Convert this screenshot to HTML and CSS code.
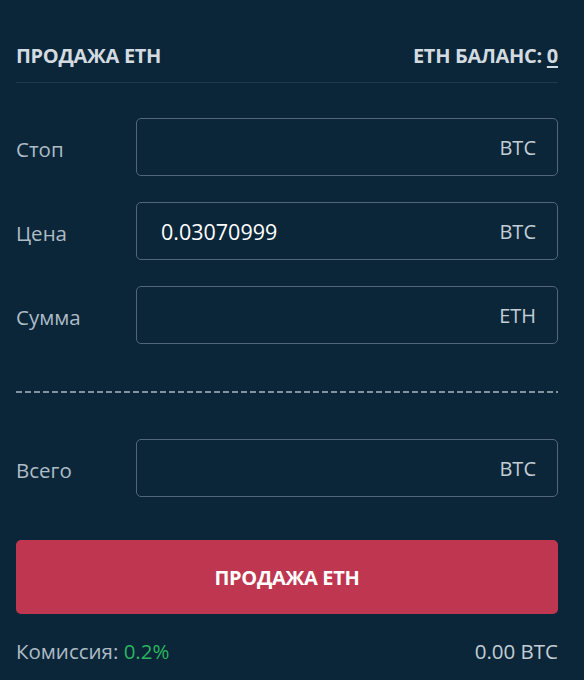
FILE: index.html
```html
<!DOCTYPE html>
<html lang="ru">
<head>
<meta charset="utf-8">
<title>Продажа ETH</title>
<link rel="stylesheet" href="styles.css">
</head>
<body>
<div class="panel">
  <div class="head">
    <h2 class="title">ПРОДАЖА ЕТН</h2>
    <div class="balance">ЕТН БАЛАНС: <span class="bal-val">0</span></div>
  </div>
  <div class="rows">
    <div class="row">
      <label class="label">Стоп</label>
      <div class="field"><span class="value"></span><span class="unit">BTC</span></div>
    </div>
    <div class="row">
      <label class="label">Цена</label>
      <div class="field"><span class="value">0.03070999</span><span class="unit">BTC</span></div>
    </div>
    <div class="row">
      <label class="label">Сумма</label>
      <div class="field"><span class="value"></span><span class="unit">ETH</span></div>
    </div>
  </div>
  <div class="dashed"></div>
  <div class="row total">
    <label class="label">Всего</label>
    <div class="field"><span class="value"></span><span class="unit">BTC</span></div>
  </div>
  <button class="sell">ПРОДАЖА ЕТН</button>
  <div class="foot">
    <div class="fee">Комиссия: <span class="fee-val">0.2%</span></div>
    <div class="sum">0.00 BTC</div>
  </div>
</div>
</body>
</html>
```
FILE: styles.css
```css
html, body {
  margin: 0;
  background: #0b2639;
}
body {
  font-family: "Open Sans", "Noto Sans", sans-serif;
  color: #a9b8c3;
}
.panel {
  padding: 0 26px 0 16px;
}
.head {
  display: flex;
  justify-content: space-between;
  align-items: center;
  padding-top: 41px;
  height: 28px;
  padding-bottom: 13px;
  border-bottom: 1px solid #1e3a4d;
}
.title {
  margin: 0;
  font-size: 20px;
  font-weight: 700;
  color: #d3dbe1;
  letter-spacing: -0.3px;
}
.balance {
  font-size: 20px;
  font-weight: 700;
  color: #d3dbe1;
  letter-spacing: -0.3px;
}
.bal-val {
  text-decoration: underline;
  text-decoration-thickness: 2px;
  text-underline-offset: 3px;
}
.rows {
  display: flex;
  flex-direction: column;
  gap: 26px;
  margin-top: 35px;
}
.row {
  display: flex;
  align-items: center;
}
.label {
  width: 120px;
  font-size: 20.5px;
  color: #aebcc6;
  padding-top: 4px;
}
.field {
  flex: 1;
  height: 56px;
  border: 1px solid #52687a;
  border-radius: 5px;
  display: flex;
  align-items: center;
  justify-content: space-between;
  padding: 0 21px 0 24px;
  font-size: 20px;
}
.value {
  color: #ffffff;
  font-size: 21.5px;
}
.unit {
  color: #c3cdd5;
}
.dashed {
  height: 2px;
  margin-top: 47px;
  background: repeating-linear-gradient(90deg, #8493a0 0 6px, transparent 6px 9px);
}
.total {
  margin-top: 46px;
}
.sell {
  display: block;
  width: 100%;
  height: 74px;
  margin-top: 43px;
  border: 0;
  border-radius: 5px;
  background: #be3650;
  color: #ffffff;
  font-family: "Open Sans", "Noto Sans", sans-serif;
  font-size: 20px;
  font-weight: 700;
  letter-spacing: -0.3px;
}
.foot {
  display: flex;
  justify-content: space-between;
  align-items: center;
  margin-top: 23px;
  font-size: 20.5px;
  color: #aebcc6;
}
.fee-val {
  color: #2ab55e;
}
.sum {
  color: #c3cdd5;
}
```
